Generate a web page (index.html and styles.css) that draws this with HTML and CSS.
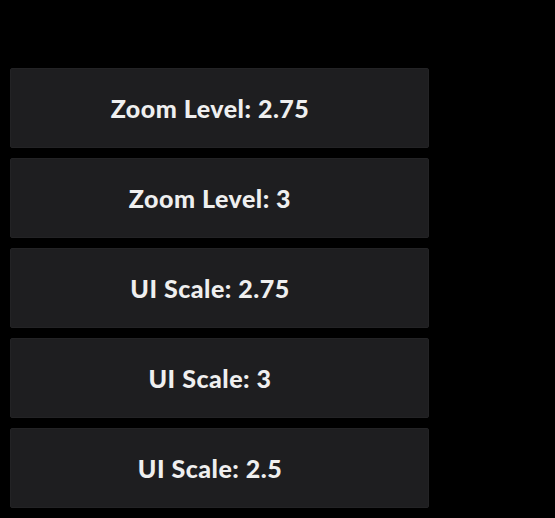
FILE: index.html
```html
<!DOCTYPE html>
<html>
<head>
<meta charset="utf-8">
<link rel="stylesheet" href="styles.css">
</head>
<body>
<div class="list">
  <button class="btn">Zoom Level: 2.75</button>
  <button class="btn">Zoom Level: 3</button>
  <button class="btn">UI Scale: 2.75</button>
  <button class="btn">UI Scale: 3</button>
  <button class="btn">UI Scale: 2.5</button>
</div>
</body>
</html>
```
FILE: styles.css
```css
html, body {
  margin: 0;
  padding: 0;
  background: #000;
}
body {
  width: 555px;
  height: 518px;
  overflow: hidden;
}
.list {
  display: flex;
  flex-direction: column;
  gap: 10px;
  padding: 68px 0 0 10px;
  width: 419px;
}
.btn {
  height: 80px;
  width: 419px;
  background: #1e1e20;
  border: 1px solid #232325;
  border-radius: 2px;
  color: #efefef;
  font-family: Lato, "Open Sans", sans-serif;
  font-weight: 900;
  font-size: 25px;
  letter-spacing: 0.5px;
  padding: 0 19px 0 0;
  margin: 0;
  cursor: pointer;
}
```
